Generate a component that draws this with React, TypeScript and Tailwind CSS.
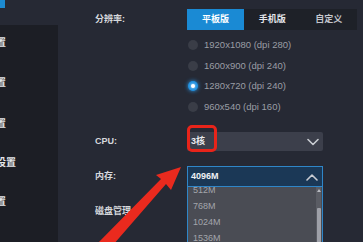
import React from "react";

const font = { fontFamily: '"Liberation Sans", "Noto Sans CJK SC", sans-serif' };

function Chevron({ up }: { up?: boolean }) {
  return (
    <svg width="12" height="8" viewBox="0 0 12 8" className="shrink-0">
      <polyline
        points={up ? "1,7 6,2 11,7" : "1,1.5 6,6.5 11,1.5"}
        fill="none"
        stroke="#c9ccd2"
        strokeWidth="1.6"
        strokeLinecap="round"
        strokeLinejoin="round"
      />
    </svg>
  );
}

function Radio({ label, checked }: { label: string; checked?: boolean }) {
  return (
    <div className="h-[20.5px] flex items-center gap-[6px] pl-[1px]">
      {checked ? (
        <div className="w-[10px] h-[10px] rounded-full bg-[#1d8fe0] flex items-center justify-center shadow-[0_0_4px_#2a9cf0]">
          <div className="w-[4px] h-[4px] rounded-full bg-white shadow-[0_0_3px_#ffffff]" />
        </div>
      ) : (
        <div className="w-[10px] h-[10px] rounded-full bg-[#3a3d47]" />
      )}
      <span className="text-[9.5px] text-[#9a9da5] whitespace-nowrap">{label}</span>
    </div>
  );
}

function SideLabel({ text, right, top }: { text: string; right: number; top: number }) {
  return (
    <div className="flex justify-end whitespace-nowrap" style={{ width: right, marginTop: top }}>
      <span className="text-[10px] leading-[12px] text-[#e4e6ea] font-bold">{text}</span>
    </div>
  );
}

export default function App() {
  return (
    <div className="w-[363px] h-[242px] overflow-hidden flex bg-[#262934] relative" style={font}>
      {/* sidebar */}
      <div className="w-[58px] flex flex-col shrink-0">
        <div className="h-[25px] bg-[#262934] relative">
          <div className="w-[5px] h-[8px] bg-[#1c8ad0]" />
        </div>
        <div className="flex-1 bg-[#1c1e25] flex flex-col">
          <SideLabel text="基本设置" right={6} top={12} />
          <SideLabel text="高级设置" right={6} top={28} />
          <SideLabel text="性能设置" right={6} top={29} />
          <SideLabel text="快捷键设置" right={16} top={27} />
          <SideLabel text="其他设置" right={6} top={27} />
        </div>
      </div>

      {/* main */}
      <div className="flex-1 pl-[37px] pt-[9px] relative">
        <div className="grid grid-cols-[92px_170px] items-center">
          <span className="text-[9px] text-[#d6d8dc] font-bold">分辨率:</span>
          <div className="h-[21px] bg-[#1e2128] flex text-[9px] font-bold">
            <div className="w-[57px] bg-[#1a8ad4] text-white flex items-center justify-center">平板版</div>
            <div className="flex-1 text-[#e4e6ea] flex items-center justify-center">手机版</div>
            <div className="flex-1 text-[#c4c6cc] flex items-center justify-center">自定义</div>
          </div>
        </div>

        <div className="ml-[92px] mt-[5px] flex flex-col">
          <Radio label="1920x1080 (dpi 280)" />
          <Radio label="1600x900 (dpi 240)" />
          <Radio label="1280x720 (dpi 240)" checked />
          <Radio label="960x540 (dpi 160)" />
        </div>

        <div className="grid grid-cols-[92px_136px] items-center mt-[15px] gap-y-[15px]">
          <span className="text-[9px] text-[#d6d8dc] font-bold">CPU:</span>
          <div className="h-[19px] bg-[#3c3f4b] rounded-[2px] flex items-center justify-between pl-[4px] pr-[4px] relative">
            <span className="text-[9px] text-[#e8eaee] font-bold">3核</span>
            <Chevron />
            <div className="absolute left-[0px] top-[-7px] w-[30px] h-[27px] border-[3px] border-[#e8241a] rounded-[5px]" />
          </div>

          <span className="text-[9px] text-[#d6d8dc] font-bold">内存:</span>
          <div className="relative">
            <div className="h-[21px] bg-[#1b3856] border border-[#2f86c8] flex items-center justify-between pl-[3px] pr-[4px]">
              <span className="text-[9px] text-[#eef0f4] font-bold">4096M</span>
              <Chevron up />
            </div>
            <div className="absolute left-0 top-[21px] w-[136px] h-[80px] bg-[#4a4c54] border-x border-[#2f86c8] flex">
              <div className="flex-1 flex flex-col pl-[5px] -mt-[5px] text-[9px] text-[#a3a5ab]">
                <span className="h-[16px] leading-[16px]">512M</span>
                <span className="h-[16px] leading-[16px]">768M</span>
                <span className="h-[16px] leading-[16px]">1024M</span>
                <span className="h-[16px] leading-[16px]">1536M</span>
              </div>
              <div className="w-[5px] mr-[1px] bg-[#5a5c64] flex flex-col items-center">
                <div className="w-0 h-0 mt-[2px] border-x-[2px] border-x-transparent border-b-[3px] border-b-[#b8bac0]" />
                <div className="w-[4px] h-[60px] mt-[16px] bg-[#9ea0a8] rounded-[1px]" />
              </div>
            </div>
          </div>

          <span className="text-[9px] text-[#d6d8dc] font-bold whitespace-nowrap">磁盘管理</span>
          <div className="h-[19px]" />
        </div>
      </div>

      {/* red arrow annotation */}
      <svg className="absolute left-0 top-0 pointer-events-none" width="363" height="242" viewBox="0 0 363 242">
        <polygon points="96,245 113,245 166,184 171,190 181,167 156,175 161,179" fill="#ea2a1e" />
      </svg>
    </div>
  );
}
